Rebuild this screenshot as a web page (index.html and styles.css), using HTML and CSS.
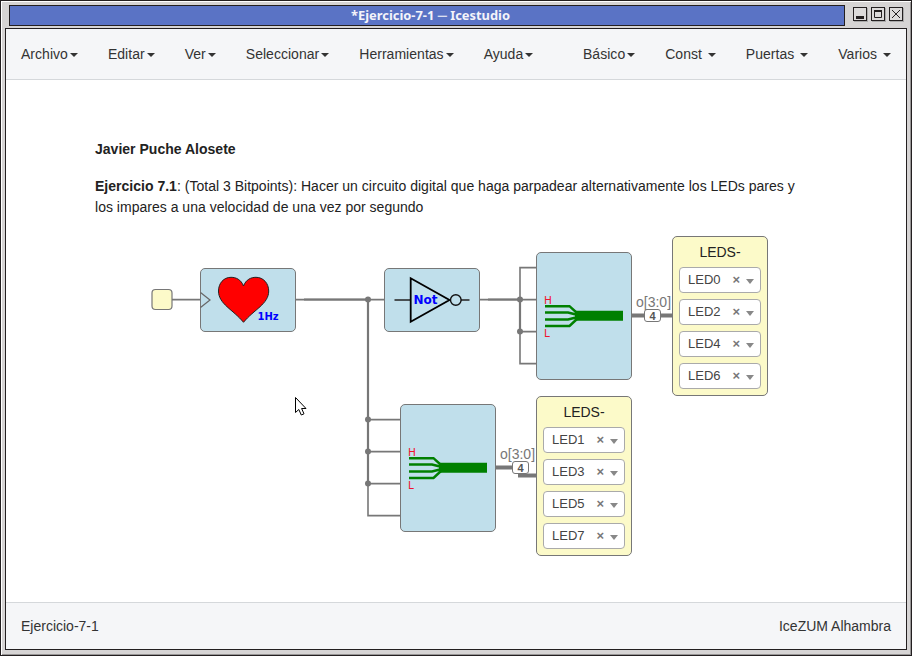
FILE: index.html
```html
<!DOCTYPE html>
<html lang="es">
<head>
<meta charset="utf-8">
<title>Ejercicio-7-1 ─ Icestudio</title>
<link rel="stylesheet" href="styles.css">
</head>
<body>
<div class="window">
  <div class="titlebar">
    <div class="title"><span>*Ejercicio-7-1 ─ Icestudio</span></div>
    <div class="controls">
      <svg class="control" viewBox="0 0 14 14"><path class="solid" d="M3 9h8v3H3z"/></svg>
      <svg class="control" viewBox="0 0 14 14"><path d="M3.5 3.5h7v7h-7z"/><path class="solid" d="M3 3h8v2H3z"/></svg>
      <svg class="control" viewBox="0 0 14 14"><path d="M3 3l8 8M11 3l-8 8"/></svg>
    </div>
  </div>
  <div class="app">
    <nav class="navbar">
      <div class="menu">
        <a>Archivo<i class="caret"></i></a><a>Editar<i class="caret"></i></a><a>Ver<i class="caret"></i></a><a>Seleccionar<i class="caret"></i></a><a>Herramientas<i class="caret"></i></a><a>Ayuda<i class="caret"></i></a>
      </div>
      <div class="menu">
        <a>Básico<i class="caret"></i></a><a>Const <i class="caret"></i></a><a>Puertas <i class="caret"></i></a><a>Varios <i class="caret"></i></a>
      </div>
    </nav>
    <main class="canvas">
      <div class="note">
        <p><b>Javier Puche Alosete</b></p>
        <p><b>Ejercicio 7.1</b>: (Total 3 Bitpoints): Hacer un circuito digital que haga parpadear alternativamente los LEDs pares y los impares a una velocidad de una vez por segundo</p>
      </div>

      <svg class="wires" viewBox="6 80 900 522">
        <g class="thin">
          <path d="M172 299.6H200M296 299.6H384M480 299.6H536"/>
          <path d="M536 267.6H520V363.6H536M520 331.6H536"/>
          <path d="M368 299.6V515.6H400M368 419.6H400M368 451.6H400M368 483.6H400"/>
        </g>
        <path class="thick" d="M304 299.5H368V484M488 299.5H520V332"/>
        <path class="bus" d="M632 315.5H673M496 467.5H520V475.5H537"/>
        <g class="dots">
          <circle cx="368" cy="299.5" r="3"/><circle cx="368" cy="419.5" r="3"/><circle cx="368" cy="451.5" r="3"/><circle cx="368" cy="483.5" r="3"/>
          <circle cx="520" cy="299.5" r="3"/><circle cx="520" cy="331.5" r="3"/>
        </g>
        <rect class="pin" x="152" y="289.500" width="20" height="20" rx="3.500"/>
      </svg>

      <div class="block heart">
        <svg viewBox="200 268 96 64">
          <path class="clock" d="M200.5 292.5L210 300L200.5 307.5"/>
          <path class="heart-shape" d="M243.5 286C241 279.500 236 277.300 231 277.300C223.500 277.300 218.500 283.500 218.500 291C218.500 304 233 309.500 243.500 322.300C254 309.500 268.700 304 268.700 291C268.700 283.500 263.500 277.300 256 277.300C251 277.300 246 279.500 243.500 286Z"/>
          <text class="hz" x="257.5" y="320">1Hz</text>
        </svg>
      </div>
      <div class="block not">
        <svg viewBox="384 268 96 64">
          <path class="lead" d="M394.500 300H411M461 300H469.500"/>
          <path class="gate" d="M410.700 278.200V321.800L449.500 300Z"/>
          <circle class="bubble" cx="455.800" cy="300" r="5.300"/>
          <text class="not-label" x="413.500" y="304">Not</text>
        </svg>
      </div>
      <div class="block join join-even">
        <svg viewBox="0 0 96 128">
          <g class="strands"><path d="M9 54.200H33.500L41 61M9 60.500H32L40 62.500M9 67.500H32L40 65.500M9 74H33.500L41 67"/></g>
          <path class="bar" d="M39 58.700H87V68.700H39z"/>
          <text x="8" y="52">H</text><text x="8" y="85">L</text>
        </svg>
      </div>
      <div class="block join join-odd">
        <svg viewBox="0 0 96 128">
          <g class="strands"><path d="M9 54.200H33.500L41 61M9 60.500H32L40 62.500M9 67.500H32L40 65.500M9 74H33.500L41 67"/></g>
          <path class="bar" d="M39 58.700H87V68.700H39z"/>
          <text x="8" y="52">H</text><text x="8" y="85">L</text>
        </svg>
      </div>
      <div class="port port-even">o[3:0]</div>
      <div class="port port-odd">o[3:0]</div>
      <div class="size size-even">4</div>
      <div class="size size-odd">4</div>

      <div class="block leds leds-even">
        <div class="name">LEDS-</div>
        <div class="select">LED0<span class="clear">×</span><i class="arrow"></i></div>
        <div class="select">LED2<span class="clear">×</span><i class="arrow"></i></div>
        <div class="select">LED4<span class="clear">×</span><i class="arrow"></i></div>
        <div class="select">LED6<span class="clear">×</span><i class="arrow"></i></div>
      </div>
      <div class="block leds leds-odd">
        <div class="name">LEDS-</div>
        <div class="select">LED1<span class="clear">×</span><i class="arrow"></i></div>
        <div class="select">LED3<span class="clear">×</span><i class="arrow"></i></div>
        <div class="select">LED5<span class="clear">×</span><i class="arrow"></i></div>
        <div class="select">LED7<span class="clear">×</span><i class="arrow"></i></div>
      </div>
      <svg class="cursor" viewBox="0 0 14 22"><path d="M1.500 1.500V16.500L4.800 13.500L7.300 19L10 17.800L7.600 12.500H12Z"/></svg>
    </main>
    <footer class="status"><span>Ejercicio-7-1</span><span>IceZUM Alhambra</span></footer>
  </div>
</div>
</body>
</html>
```
FILE: styles.css
```css
* { box-sizing: border-box; }

body {
  margin: 0;
  font: 14px/20px "Liberation Sans", Arial, sans-serif;
  color: #333;
}

.window {
  display: flex;
  flex-direction: column;
  width: 912px;
  height: 656px;
  padding: 3px 4px 5px;
  border: 1px solid #231f20;
  background: #d6d4d4;
  box-shadow: inset 1px 1px #fff, inset -1px -1px #979595;
}

.titlebar {
  display: flex;
  align-items: flex-start;
  height: 24px;
  padding: 1px 2px 0 4px;
}

.title {
  flex: none;
  width: 836px;
  height: 21px;
  padding-left: 7px;
  border: 1px solid #231f20;
  background: #5a73c5;
  color: #f4f4fa;
  font: bold 12.900px/19px "Noto Sans", sans-serif;
  text-align: center;
  white-space: nowrap;
}

.controls { display: flex; gap: 4px; margin: 2px 0 0 8px; }

.control {
  width: 14px;
  height: 14px;
  outline: 1px solid #231f20;
  outline-offset: -1px;
  box-shadow: 1px 1px #aaa;
  background: #dcdada;
  fill: none;
  stroke: #231f20;
}
.control .solid { fill: #231f20; stroke: none; }

.app {
  display: flex;
  flex-direction: column;
  flex: 1;
  border: 1px solid #231f20;
  background: #fff;
}

.navbar {
  display: flex;
  justify-content: space-between;
  flex: none;
  height: 51px;
  border-bottom: 1px solid #d5d8db;
  background: #f5f6f8;
}
.menu { display: flex; letter-spacing: 0.030px; }
.menu a { padding: 15px; white-space: pre; }

.caret {
  display: inline-block;
  margin-left: 2px;
  vertical-align: middle;
  border-top: 4px solid;
  border-right: 4px solid transparent;
  border-left: 4px solid transparent;
}

.canvas { position: relative; flex: 1; }

.note {
  width: 712px;
  margin: 59px 0 0 89px;
  line-height: 21px;
  letter-spacing: 0.015px;
  color: #222;
}
.note p { margin: 0 0 16px; }

.wires { position: absolute; left: 0; top: 0; width: 900px; height: 522px; fill: none; stroke: #777; }
.thin { stroke-width: 1.600; }
.thick { stroke-width: 2.200; }
.bus { stroke-width: 4; }
.dots { fill: #777; stroke: none; }
.pin { fill: #fcfac9; stroke-width: 1.200; }

.block { position: absolute; border: 1px solid #777; border-radius: 5px; background: #c0dfeb; }
.block > svg { display: block; width: 96px; height: 64px; margin: -1px; }

.heart { left: 194px; top: 188px; width: 96px; height: 64px; }
.not { left: 378px; top: 188px; width: 96px; height: 64px; }
.join { width: 96px; height: 128px; }
.join > svg { height: 128px; }
.join-even { left: 530px; top: 172px; }
.join-odd { left: 394px; top: 324px; }

.clock { fill: none; stroke: #666; stroke-width: 1.200; }
.heart-shape { fill: #f00; stroke: #222; }
.hz { fill: #00f; font: bold 10px "DejaVu Sans", sans-serif; }
.not-label { fill: #00f; font: bold 12px "DejaVu Sans", sans-serif; }
.lead { stroke: #222; stroke-width: 1.500; }
.gate { fill: none; stroke: #000; stroke-width: 1.800; }
.bubble { fill: none; stroke: #111; stroke-width: 1.400; }
.strands { fill: none; stroke: #008000; stroke-width: 2.400; }
.bar { fill: #008000; }
.join text { fill: #f0142d; font: 10.500px "DejaVu Sans", sans-serif; }

.port { position: absolute; color: #777; line-height: 16px; }
.port-even { left: 630px; top: 214px; }
.port-odd { left: 494px; top: 366px; }

.size {
  position: absolute;
  width: 17px;
  height: 13px;
  border: 1px solid #777;
  border-radius: 3px;
  background: #fff;
  color: #555;
  font-size: 11px;
  font-weight: bold;
  line-height: 12px;
  text-align: center;
}
.size-even { left: 638px; top: 229px; }
.size-odd { left: 506px; top: 381px; }

.leds {
  display: flex;
  flex-direction: column;
  gap: 6px;
  width: 96px;
  height: 160px;
  padding: 5px 6px;
  background: #fcfac9;
}
.leds-even { left: 666px; top: 156px; }
.leds-odd { left: 530px; top: 316px; }
.name { height: 19px; line-height: 20px; text-align: center; color: #222; }

.select {
  display: flex;
  align-items: center;
  flex: none;
  width: 82px;
  height: 26px;
  padding: 0 6px 0 8px;
  border: 1px solid #aaa;
  border-radius: 4px;
  background: #fff;
  color: #444;
  font-size: 13px;
}
.clear { margin-left: auto; color: #777; font-weight: bold; }
.arrow {
  margin: 3px 0 0 6px;
  border-top: 5px solid #888;
  border-right: 4px solid transparent;
  border-left: 4px solid transparent;
}

.cursor { position: absolute; left: 288px; top: 316px; width: 14px; height: 22px; fill: #fff; stroke: #000; }

.status {
  display: flex;
  justify-content: space-between;
  flex: none;
  height: 47px;
  padding: 13px 15px;
  border-top: 1px solid #d5d8db;
  background: #f5f6f8;
}
```
